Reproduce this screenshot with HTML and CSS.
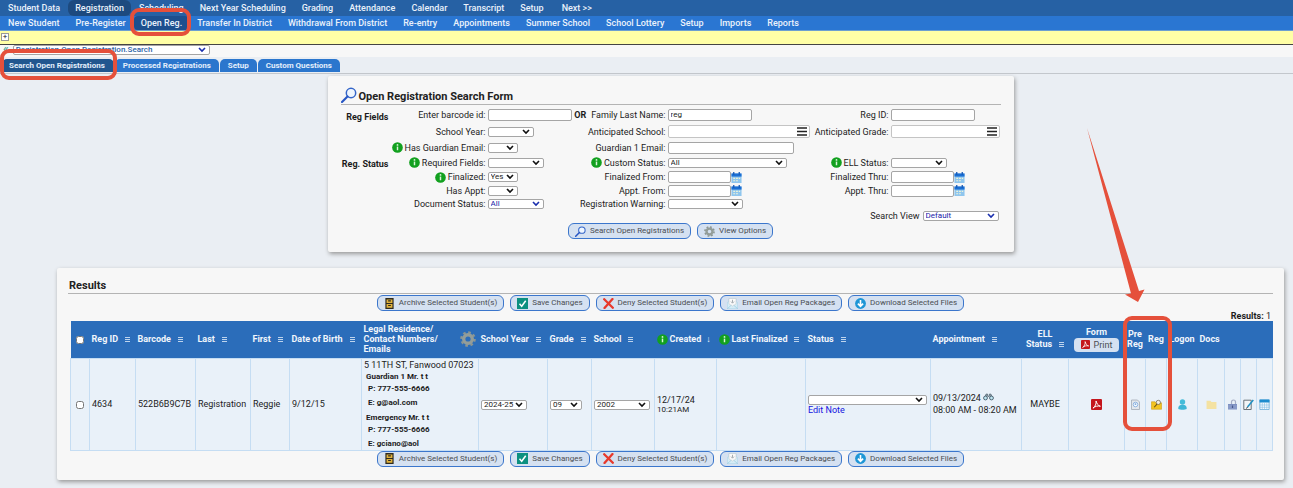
FILE: index.html
```html
<!DOCTYPE html>
<html lang="en">
  <head>
    <meta charset="utf-8">
    <title>Open Registration</title>
    <link rel="stylesheet" href="styles.css">
    <meta name="viewport" content="width=device-width, initial-scale=1" />
  </head>
  <body>
    <svg class="defs" width="0" height="0" aria-hidden="true">
      <symbol id="i-sort" viewBox="0 0 5 5"><path d="M0 .5h5M0 2.500h5M0 4.500h5" stroke="currentColor" stroke-width=".9" /></symbol>
      <symbol id="i-info" viewBox="0 0 12 12"><circle cx="6" cy="6" r="5.800" fill="#12a01f" /><path d="M6 5v4" stroke="#d9f5d9" stroke-width="1.600" /><circle cx="6" cy="3.200" r="1" fill="#d9f5d9" /></symbol>
      <symbol id="i-search" viewBox="0 0 16 16"><circle cx="10" cy="6" r="4.700" fill="#eef6ff" stroke="#3465c8" stroke-width="1.500" /><path d="M6.500 9.500L1 15" stroke="#2756c4" stroke-width="2.200" stroke-linecap="round" /></symbol>
      <symbol id="i-gear" viewBox="0 0 16 16"><circle cx="8" cy="8" r="6.600" fill="none" stroke="#8c9692" stroke-width="2.400" stroke-dasharray="2.600 2.580" /><circle cx="8" cy="8" r="4.300" fill="none" stroke="#939d99" stroke-width="3.400" /></symbol>
      <symbol id="i-cal" viewBox="0 0 11 12"><path d="M0 2h11v10H0z" fill="#8fc6ee" /><path d="M0 1.500h11V5H0z" fill="#1a6fd4" /><path d="M2.500 0v3M8.500 0v3" stroke="#1558b4" stroke-width="1.400" /><path d="M2 7h2M5 7h2M8 7h1.500M2 9.500h2M5 9.500h2" stroke="#eef3d8" stroke-width="1.200" /></symbol>
      <symbol id="i-menu" viewBox="0 0 10 9"><path d="M0 1h10M0 4.500h10M0 8h10" stroke="#222" stroke-width="1.500" /></symbol>
      <symbol id="i-archive" viewBox="0 0 11 12"><path d="M1 0h9v12H1z" fill="#2d2a20" /><path d="M2.300 1.500h6.400v4H2.300zM2.300 6.500h6.400v4H2.300z" fill="#e0b23c" /><path d="M4 2.500h3v1.300H4zM4 7.500h3v1.300H4z" fill="#2d2a20" /></symbol>
      <symbol id="i-check" viewBox="0 0 11 11"><path d="M0 0h11v11H0z" fill="#0c9080" /><path d="M2.500 5.800L4.700 8.300L8.700 2.800" fill="none" stroke="#fff" stroke-width="1.500" /></symbol>
      <symbol id="i-deny" viewBox="0 0 11 11"><path d="M1.200 1.200L9.800 9.800M9.500 1L1.500 10" stroke="#e8392c" stroke-width="2.300" stroke-linecap="round" /></symbol>
      <symbol id="i-mail" viewBox="0 0 11 11"><path d="M.3 4.500L2 3.500V.500h7v3l1.700 1V10.700H.3z" fill="#d5ecf6" stroke="#a6d2e6" stroke-width=".6" /><path d="M2 .5h7v5.500L5.500 8 2 6z" fill="#fafafa" stroke="#c0c6ca" stroke-width=".5" /><path d="M5.500 1.800v3M4 3.600l1.500 1.600L7 3.600" fill="none" stroke="#a8aeb2" /><path d="M.3 10.700l4-3.500M10.700 10.700l-4-3.500" stroke="#8fc4dc" stroke-width=".6" /></symbol>
      <symbol id="i-down" viewBox="0 0 11 11"><circle cx="5.500" cy="5.500" r="5.400" fill="#1e96d6" /><path d="M5.500 2v6M2.900 5.600l2.600 2.700 2.600-2.700" fill="none" stroke="#fff" stroke-width="1.600" /></symbol>
      <symbol id="i-pdf" viewBox="0 0 10 10"><rect width="10" height="10" rx="1" fill="#c4151c" /><path d="M4.600 1.800C5.400 4.300 6.300 6 8.500 6.600C6 6 3.800 6.600 1.800 8.300C3.800 6.800 5 4.300 4.600 1.800z" fill="none" stroke="#fff" stroke-width=".9" /></symbol>
      <symbol id="i-doc" viewBox="0 0 10 11"><path d="M1 1h6l2 2v7.500H1z" fill="#e3e7ec" stroke="#a3abb5" stroke-width=".8" /><circle cx="5" cy="5.500" r="2.300" fill="#f5faff" stroke="#7aa7dc" stroke-width=".8" /><path d="M4.300 7V4.200l2 .9-2 1z" fill="#4b86cc" /></symbol>
      <symbol id="i-regfolder" viewBox="0 0 12 11"><path d="M.5 2.500h4l1 1.200h6v7H.5z" fill="#f3c41f" stroke="#c99b12" stroke-width=".6" /><circle cx="8" cy="3.200" r="2.300" fill="#f3efe0" stroke="#6b6250" stroke-width=".8" /><path d="M6.500 5L3.500 8.500" stroke="#6e5410" stroke-width="1.200" /></symbol>
      <symbol id="i-user" viewBox="0 0 10 11"><circle cx="5" cy="3" r="2.700" fill="#45bcd9" /><path d="M.8 10C.5 7 2 5.800 5 5.800S9.500 7 9.200 10c-1.500 1-6.900 1-8.400 0z" fill="#3fb6d6" /></symbol>
      <symbol id="i-folder" viewBox="0 0 10 9"><path d="M.5 1h3.500l1 1.200h4.500V8.500h-9z" fill="#f4e2a2" /></symbol>
      <symbol id="i-lock" viewBox="0 0 10 11"><path d="M4 5V3C4 .3 8 .3 8 3v2" fill="none" stroke="#a6aec6" stroke-width="1.200" /><path d="M.5 5h9v5.500h-9z" fill="#7d90c2" /><path d="M.5 7h9M.5 9h9" stroke="#a5b2d6" stroke-width=".6" /><path d="M5 6.500v2.500" stroke="#48588c" stroke-width="1.200" /></symbol>
      <symbol id="i-edit" viewBox="0 0 11 11"><path d="M.8 1.200h7.400v9.300H.8z" fill="#f3f5f6" stroke="#5b656d" stroke-width=".9" /><path d="M10.300 1L4.500 8" stroke="#2091c4" stroke-width="1.500" /><path d="M4.500 8l-1 1.500" stroke="#333" /></symbol>
      <symbol id="i-grid" viewBox="0 0 10 11"><path d="M.4 1h9.200v9.500H.4z" fill="#f4faff" stroke="#57a3d4" stroke-width=".7" /><path d="M0 .5h10v3H0z" fill="#1d8cce" /><path d="M2.800 3.500v7M5 3.500v7M7.300 3.500v7M0 6h10M0 8.300h10" stroke="#86bfe2" stroke-width=".6" /></symbol>
      <symbol id="i-bino" viewBox="0 0 11 8"><path d="M2 3.500L3.200 1h1.300l.5 2.500h1L6.500 1h1.300L9 3.500" fill="#8a979f" stroke="#5b6f7c" stroke-width=".8" /><circle cx="2.500" cy="5" r="1.900" fill="#bfe6f2" stroke="#4e6675" /><circle cx="8.500" cy="5" r="1.900" fill="#bfe6f2" stroke="#4e6675" /></symbol>
    </svg>

    <nav class="topnav">
      <a href="#">Student Data</a>
      <a href="#" class="current">Registration</a>
      <a href="#">Scheduling</a>
      <a href="#">Next Year Scheduling</a>
      <a href="#">Grading</a>
      <a href="#">Attendance</a>
      <a href="#">Calendar</a>
      <a href="#">Transcript</a>
      <a href="#">Setup</a>
      <a href="#" class="next">Next &gt;&gt;</a>
    </nav>
    <nav class="subnav">
      <a href="#">New Student</a>
      <a href="#">Pre-Register</a>
      <a href="#" class="current">Open Reg.<span class="ring ring-nav"></span></a>
      <a href="#">Transfer In District</a>
      <a href="#">Withdrawal From District</a>
      <a href="#">Re-entry</a>
      <a href="#">Appointments</a>
      <a href="#">Summer School</a>
      <a href="#">School Lottery</a>
      <a href="#">Setup</a>
      <a href="#">Imports</a>
      <a href="#">Reports</a>
    </nav>
    <div class="notice"><button type="button" class="expand" aria-label="Expand">+</button></div>
    <div class="crumbs">
      <a href="#" class="back">«</a>
      <select class="path" aria-label="Page"><option>Registration.Open Registration.Search</option></select>
    </div>
    <nav class="tabs">
      <a href="#" class="current">Search Open Registrations<span class="ring ring-tab"></span></a>
      <a href="#">Processed Registrations</a>
      <a href="#">Setup</a>
      <a href="#">Custom Questions</a>
    </nav>

    <main>
      <form class="panel search">
        <h1><svg class="lens"><use href="#i-search" /></svg>Open Registration Search Form</h1>
        <div class="fields">
          <b class="section">Reg Fields</b>
          <label for="barcode">Enter barcode id:</label>
          <div><input id="barcode" type="text" class="text"></div>
          <label for="lastname"><b>OR</b>Family Last Name:</label>
          <div><input id="lastname" type="text" class="text" value="reg"></div>
          <label for="regid">Reg ID:</label>
          <div><input id="regid" type="text" class="text"></div>

          <label for="year" class="first">School Year:</label>
          <div><select id="year" class="w45"><option></option></select></div>
          <label for="school">Anticipated School:</label>
          <div class="picker"><input id="school" type="text"><button type="button" aria-label="Pick school"><svg><use href="#i-menu" /></svg></button></div>
          <label for="grade">Anticipated Grade:</label>
          <div class="picker short"><input id="grade" type="text"><button type="button" aria-label="Pick grade"><svg><use href="#i-menu" /></svg></button></div>

          <label for="hasemail" class="first"><svg class="info"><use href="#i-info" /></svg>Has Guardian Email:</label>
          <div><select id="hasemail" class="w30"><option></option></select></div>
          <label for="gemail">Guardian 1 Email:</label>
          <div class="rest"><input id="gemail" type="text" class="text wide"></div>

          <b class="section">Reg. Status</b>
          <label for="required"><svg class="info"><use href="#i-info" /></svg>Required Fields:</label>
          <div><select id="required" class="w55"><option></option></select></div>
          <label for="custom"><svg class="info"><use href="#i-info" /></svg>Custom Status:</label>
          <div><select id="custom" class="w119"><option>All</option></select></div>
          <label for="ell"><svg class="info"><use href="#i-info" /></svg>ELL Status:</label>
          <div><select id="ell" class="w55"><option></option></select></div>

          <label for="finalized" class="first"><svg class="info"><use href="#i-info" /></svg>Finalized:</label>
          <div><select id="finalized" class="w30"><option>Yes</option></select></div>
          <label for="finfrom">Finalized From:</label>
          <div><input id="finfrom" type="text" class="date"><button type="button" class="cal" aria-label="Calendar"><svg><use href="#i-cal" /></svg></button></div>
          <label for="finthru">Finalized Thru:</label>
          <div><input id="finthru" type="text" class="date"><button type="button" class="cal" aria-label="Calendar"><svg><use href="#i-cal" /></svg></button></div>

          <label for="hasappt" class="first">Has Appt:</label>
          <div><select id="hasappt" class="w30"><option></option></select></div>
          <label for="apptfrom">Appt. From:</label>
          <div><input id="apptfrom" type="text" class="date"><button type="button" class="cal" aria-label="Calendar"><svg><use href="#i-cal" /></svg></button></div>
          <label for="apptthru">Appt. Thru:</label>
          <div><input id="apptthru" type="text" class="date"><button type="button" class="cal" aria-label="Calendar"><svg><use href="#i-cal" /></svg></button></div>

          <label for="docstatus" class="first">Document Status:</label>
          <div><select id="docstatus" class="w55 blue"><option>All</option></select></div>
          <label for="warning">Registration Warning:</label>
          <div><select id="warning" class="w75"><option></option></select></div>
        </div>
        <div class="view">
          <label for="view">Search View</label>
          <select id="view" class="w76 blue"><option>Default</option></select>
        </div>
        <div class="buttons">
          <button type="button" class="btn"><svg><use href="#i-search" /></svg>Search Open Registrations</button>
          <button type="button" class="btn"><svg><use href="#i-gear" /></svg>View Options</button>
        </div>
      </form>

      <section class="panel results">
        <h2>Results</h2>
        <div class="buttons">
          <button type="button" class="btn"><svg><use href="#i-archive" /></svg>Archive Selected Student(s)</button>
          <button type="button" class="btn"><svg><use href="#i-check" /></svg>Save Changes</button>
          <button type="button" class="btn"><svg><use href="#i-deny" /></svg>Deny Selected Student(s)</button>
          <button type="button" class="btn"><svg><use href="#i-mail" /></svg>Email Open Reg Packages</button>
          <button type="button" class="btn"><svg><use href="#i-down" /></svg>Download Selected Files</button>
        </div>
        <p class="count"><b>Results:</b> 1</p>
        <table>
          <colgroup>
            <col class="c-check"><col class="c-id"><col class="c-barcode"><col class="c-last"><col class="c-first"><col class="c-dob"><col class="c-contact"><col class="c-year"><col class="c-grade"><col class="c-school"><col class="c-created"><col class="c-final"><col class="c-status"><col class="c-appt"><col class="c-ell"><col class="c-form"><col class="c-pre"><col class="c-pre"><col class="c-logon"><col class="c-docs"><col class="c-tool"><col class="c-tool"><col class="c-tool">
          </colgroup>
          <thead>
            <tr>
              <th class="mid"><input type="checkbox" aria-label="Select all"></th>
              <th>Reg ID<svg class="sort"><use href="#i-sort" /></svg></th>
              <th>Barcode<svg class="sort"><use href="#i-sort" /></svg></th>
              <th>Last<svg class="sort"><use href="#i-sort" /></svg></th>
              <th>First<svg class="sort"><use href="#i-sort" /></svg></th>
              <th>Date of Birth<svg class="sort"><use href="#i-sort" /></svg></th>
              <th><div class="legal"><span>Legal Residence/<br>Contact Numbers/<br>Emails</span><svg class="gear"><use href="#i-gear" /></svg></div></th>
              <th>School Year<svg class="sort"><use href="#i-sort" /></svg></th>
              <th>Grade<svg class="sort"><use href="#i-sort" /></svg></th>
              <th>School<svg class="sort"><use href="#i-sort" /></svg></th>
              <th><svg class="info"><use href="#i-info" /></svg>Created<span class="down">↓</span></th>
              <th><svg class="info"><use href="#i-info" /></svg>Last Finalized<svg class="sort"><use href="#i-sort" /></svg></th>
              <th>Status<svg class="sort"><use href="#i-sort" /></svg></th>
              <th>Appointment<svg class="sort"><use href="#i-sort" /></svg></th>
              <th class="mid">ELL<br>Status<svg class="sort"><use href="#i-sort" /></svg></th>
              <th class="mid">Form<button type="button" class="print"><svg><use href="#i-pdf" /></svg>Print</button></th>
              <th class="mid pre">Pre<br>Reg
                <span class="ring ring-cols"></span>
                <svg class="arrow" viewBox="0 0 58 174"><path d="M0 0L52 163L57.500 161.500L51 174L38 166.500L44 165.500z" fill="#e5503b" /></svg>
              </th>
              <th class="mid">Reg</th>
              <th class="mid">Logon</th>
              <th>Docs</th>
              <th></th>
              <th></th>
              <th></th>
            </tr>
          </thead>
          <tbody>
            <tr>
              <td class="mid"><input type="checkbox" aria-label="Select 4634"></td>
              <td>4634</td>
              <td>522B6B9C7B</td>
              <td>Registration</td>
              <td>Reggie</td>
              <td>9/12/15</td>
              <td>
                <div class="addr">5 11TH ST, Fanwood 07023</div>
                <div class="person">Guardian 1 Mr. t t</div>
                <div class="phone">P: 777-555-6666</div>
                <div class="email">E: g@aol.com</div>
                <div class="person">Emergency Mr. t t</div>
                <div class="phone">P: 777-555-6666</div>
                <div class="email">E: gciano@aol</div>
              </td>
              <td><select class="w45" aria-label="School Year"><option>2024-25</option></select></td>
              <td><select class="w32" aria-label="Grade"><option>09</option></select></td>
              <td><select class="w55" aria-label="School"><option>2002</option></select></td>
              <td>12/17/24<div class="time">10:21AM</div></td>
              <td></td>
              <td><select class="w119" aria-label="Status"><option></option></select><a href="#" class="note">Edit Note</a></td>
              <td>09/13/2024 <svg class="bino"><use href="#i-bino" /></svg><br>08:00 AM - 08:20 AM</td>
              <td class="mid">MAYBE</td>
              <td class="mid"><a href="#" aria-label="PDF"><svg class="icon"><use href="#i-pdf" /></svg></a></td>
              <td class="mid"><a href="#" aria-label="Pre-register"><svg class="icon"><use href="#i-doc" /></svg></a></td>
              <td class="mid"><a href="#" aria-label="Register"><svg class="icon"><use href="#i-regfolder" /></svg></a></td>
              <td class="mid"><a href="#" aria-label="Logon"><svg class="icon"><use href="#i-user" /></svg></a></td>
              <td class="mid"><a href="#" aria-label="Documents"><svg class="icon"><use href="#i-folder" /></svg></a></td>
              <td class="mid"><a href="#" aria-label="Lock"><svg class="icon"><use href="#i-lock" /></svg></a></td>
              <td class="mid"><a href="#" aria-label="Edit"><svg class="icon"><use href="#i-edit" /></svg></a></td>
              <td class="mid"><a href="#" aria-label="Calendar"><svg class="icon"><use href="#i-grid" /></svg></a></td>
            </tr>
          </tbody>
        </table>
        <div class="buttons">
          <button type="button" class="btn"><svg><use href="#i-archive" /></svg>Archive Selected Student(s)</button>
          <button type="button" class="btn"><svg><use href="#i-check" /></svg>Save Changes</button>
          <button type="button" class="btn"><svg><use href="#i-deny" /></svg>Deny Selected Student(s)</button>
          <button type="button" class="btn"><svg><use href="#i-mail" /></svg>Email Open Reg Packages</button>
          <button type="button" class="btn"><svg><use href="#i-down" /></svg>Download Selected Files</button>
        </div>
      </section>
    </main>
  </body>
</html>
```
FILE: styles.css
```css
* {box-sizing: border-box;}
body {margin: 0; background-color: #eaeef3; color: #1c1c1c; font: 9px/12px Roboto, "Liberation Sans", sans-serif;}
a {text-decoration: none;}
input, select, button {font: inherit; color: inherit; margin: 0;}
button {cursor: pointer;}
.defs {position: absolute;}

/* navigation */
.topnav, .subnav {display: flex; white-space: nowrap;}
.topnav {background-color: #2661a4;}
.subnav {background-color: #2a76d2; border-bottom: 1px solid #6c9fd0;}
.topnav a, .subnav a {padding: 0 8px; color: #eaf2fb; font-weight: 500; line-height: 16px;}
.subnav a {line-height: 14px; position: relative;}
.topnav .current {padding: 0 7px; background-color: #1d4a7f; border-radius: 6px;}
.topnav .next {padding-left: 10px;}
.subnav .current {padding: 0 7px; background-color: #1c4f8e; border-radius: 4px;}

.notice {height: 14px; padding: 2px 1px; background-color: #ffffa6; border-bottom: 1px solid #444;}
.expand {display: block; width: 8px; height: 8px; padding: 0; border: 1px solid #999; background-color: #fff; font-size: 8px; line-height: 6px;}
.crumbs {display: flex; gap: 4px; height: 12px; padding-left: 3px; background-color: #f7f7f7;}
.back {color: #2a9a8a; font-size: 12px; line-height: 9px;}
.crumbs .path {width: 197px; height: 10px; color: #2a62a5; font-size: 8px; font-weight: 500;}

.tabs {display: flex; gap: 1px; height: 17px; padding: 2px 2px 0; border-bottom: 1px solid #c3c7cc; white-space: nowrap;}
.tabs a {height: 13px; padding: 0 8px; border-radius: 5px 5px 0 0; background-color: #2b76cd; color: #e3eefb; font-size: 8px; font-weight: 700; line-height: 13px; position: relative;}
.tabs .current {padding: 0 9px 0 7px; background-color: #21568f;}

main {padding: 2px 9px 8px 57px;}
.panel {background-color: #f7f7f7; border-radius: 2px; box-shadow: 1px 2px 4px #999;}
h1, h2 {margin: 0; border-bottom: 1px solid #b4b4b4; font-size: 11px; font-weight: 700; color: #222;}

/* search form */
.search {width: 686px; max-width: 100%; margin: 0 auto 16px; padding: 11px 13px 13px;}
h1 {display: flex; align-items: center; height: 18px; margin-bottom: 2px; padding-top: 3px;}
.lens {width: 16px; height: 16px; margin: -4px 2px 0 0;}
.fields {display: grid; grid-template-columns: 48px 99px 86px 94px 142px 81px 1fr; grid-template-rows: 16px 17px 15px 15px 14px 13px 13px; align-items: center; white-space: nowrap;}
.fields > div {display: flex; align-items: center;}
.fields label {display: flex; align-items: center; justify-content: flex-end; padding-right: 2px;}
.fields label b {margin-right: 5px;}
.section {text-align: right; padding-top: 3px;}
.first {grid-column: 2;}
.rest {grid-column: 5 / 8;}
.info {width: 11px; height: 11px; margin-right: 2px; vertical-align: middle;}

input[type=text] {height: 12px; padding: 0 2px; border: 1px solid #a5a5a5; border-radius: 2px; background-color: #fff; font-size: 8px;}
.text {width: 84px;}
.text.wide {width: 126px;}
.date {width: 63px;}
.cal {width: 11px; height: 11px; padding: 0; border: 0; background: none;}
.cal svg, .picker svg {display: block; width: 100%; height: 100%;}
.picker {width: 142px; height: 13px; border: 1px solid #c4c4c4; border-radius: 2px; background-color: #fff;}
.picker.short {width: 109px;}
.picker input[type=text] {flex: 1; min-width: 0; height: 11px; border: 0;}
.picker button {width: 10px; height: 9px; margin-right: 2px; padding: 0; border: 0; background: none;}

select {height: 10px; padding: 0 10px 0 2px; border: 1px solid #a5a5a5; border-radius: 2px; appearance: none; font-size: 8px; line-height: 8px; color: #1c1c1c;
  background: #fff url("data:image/svg+xml,%3Csvg xmlns='http://www.w3.org/2000/svg' width='8' height='6'%3E%3Cpath d='M1 1l3 3 3-3' fill='none' stroke='%23111' stroke-width='1.600'/%3E%3C/svg%3E") no-repeat right 3px center;}
.blue, .crumbs .path {background-image: url("data:image/svg+xml,%3Csvg xmlns='http://www.w3.org/2000/svg' width='8' height='6'%3E%3Cpath d='M1 1l3 3 3-3' fill='none' stroke='%231a2fae' stroke-width='1.600'/%3E%3C/svg%3E");}
.blue {color: #1a1aa8;}
.w30 {width: 30px;}
.w32 {width: 32px;}
.w45 {width: 46px;}
.w55 {width: 56px;}
.w75 {width: 75px;}
.w76 {width: 76px;}
.w119 {width: 119px;}

.view {display: flex; justify-content: flex-end; align-items: center; gap: 3px; margin-bottom: 1px; padding-right: 2px;}
.buttons {display: flex; flex-wrap: wrap; justify-content: center; gap: 6px;}
.btn {display: flex; align-items: center; height: 16px; padding: 0 6px; border: 1px solid #3b76cc; border-radius: 6px; background-color: #d5e1f1; color: #4a4d52; font-size: 8px; white-space: nowrap;}
.btn svg {width: 11px; height: 11px; margin-right: 4px;}

/* results */
.results {padding: 11px 11px 13px;}
h2 {height: 15px; margin-bottom: 1px; padding-left: 1px; line-height: 14px;}
.count {margin: 0; padding-right: 2px; text-align: right; line-height: 10px;}
table {width: 100%; margin-left: 2px; border-collapse: collapse; table-layout: fixed;}
.results table {width: calc(100% - 2px);}
th {height: 37px; padding: 0 0 0 2px; background-color: #2b6dba; color: #f1f6fc; font-weight: 700; line-height: 10px; text-align: left; white-space: nowrap;}
td {height: 92px; padding: 0 0 0 2px; border: 1px solid #c5ddf3; background-color: #e9f1f9; white-space: nowrap;}
th.mid, td.mid {padding: 0; text-align: center;}
input[type=checkbox] {width: 8px; height: 8px; vertical-align: middle;}
.sort {width: 5px; height: 5px; margin-left: 7px; color: #cfe0f3;}
.down {margin-left: 5px;}
.legal {display: flex; align-items: center; justify-content: space-between;}
.gear {width: 16px; height: 16px; margin-right: 3px;}
.print {display: flex; align-items: center; justify-content: center; width: 45px; height: 14px; margin: 1px auto 0; padding: 0; border: 0; border-radius: 4px; background-color: #d5e1f1; color: #4a4d52; font-size: 9px; font-weight: 400;}
.print svg {width: 9px; height: 9px; margin-right: 4px;}
.person, .phone, .email {font-size: 8px; font-weight: 700; padding-left: 2px;}
.phone, .email {padding-left: 4px;}
.email {margin: 2px 0 3px;}
.email:last-child {margin-bottom: 0;}
.time {font-size: 8px; line-height: 8px;}
.note {display: block; line-height: 10px; color: #1414e0;}
.bino {width: 11px; height: 8px;}
.icon {display: inline-block; width: 11px; height: 11px; vertical-align: middle;}

.c-check {width: 19px;}
.c-id {width: 46px;}
.c-barcode {width: 60px;}
.c-last {width: 55px;}
.c-first {width: 39px;}
.c-dob {width: 72px;}
.c-contact {width: 117px;}
.c-year {width: 69px;}
.c-grade {width: 44px;}
.c-school {width: 63px;}
.c-created {width: 62px;}
.c-final {width: 89px;}
.c-appt {width: 91px;}
.c-ell {width: 47px;}
.c-form {width: 56px;}
.c-pre {width: 21px;}
.c-logon {width: 31px;}
.c-docs {width: 27px;}
.c-tool {width: 16px;}

/* callouts */
.ring {position: absolute; z-index: 2; border: 4px solid #e5503b; border-radius: 9px; pointer-events: none;}
.ring-nav {left: -4px; top: -8px; width: 61px; height: 28px;}
.ring-tab {left: -2px; top: -10px; width: 117px; height: 31px;}
.pre {position: relative;}
.ring-cols {left: -2px; top: -5px; width: 49px; height: 115px;}
.arrow {position: absolute; z-index: 2; left: -38px; top: -193px; width: 58px; height: 174px; pointer-events: none;}
```
